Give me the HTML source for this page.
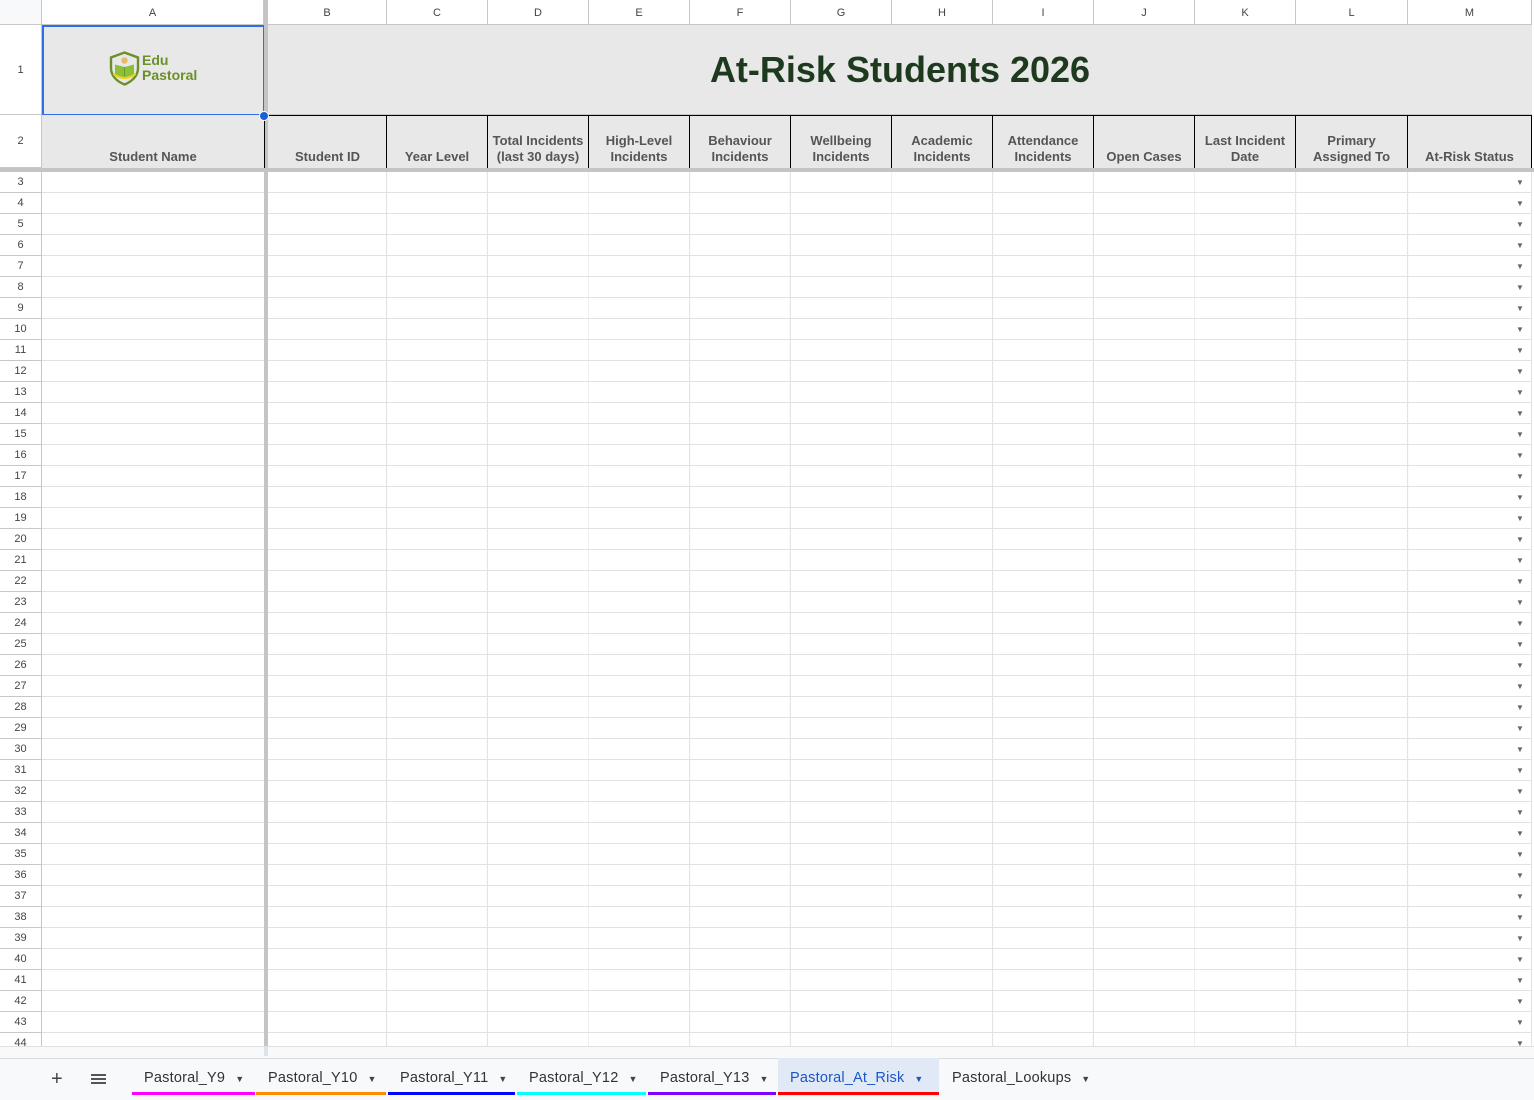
<!DOCTYPE html>
<html><head><meta charset="utf-8"><style>
*{box-sizing:border-box;margin:0;padding:0}
body{width:1534px;height:1100px;background:#fff;position:relative;overflow:hidden;font-family:"Liberation Sans",Arial,sans-serif}
.abs{position:absolute}
.colhdr{top:0;height:25px;background:#fff;border-bottom:1px solid #c7c7c7;border-right:1px solid #c7c7c7;font-size:11px;color:#444;text-align:center;line-height:26px}
.rownum{left:0;width:42px;font-size:11px;color:#444;text-align:center;border-right:1px solid #c7c7c7;border-bottom:1px solid #c7c7c7;background:#fff}
.h2{top:115px;height:53px;background:#e8e8e8;border-right:1px solid #000;border-top:1px solid #000;font-weight:bold;font-size:13px;color:#555;text-align:center;display:flex;align-items:flex-end;justify-content:center;padding-bottom:3px;line-height:16px}
#rows div{height:21px;line-height:21px}
.tab{top:1058px;height:38px;font-size:14.5px;color:#333;line-height:40px;padding-left:12px;letter-spacing:.2px}
.tab span{font-size:9px;margin-left:10px;color:#444}
</style></head><body>
<div class="abs colhdr" style="left:0;width:42px;background:#f8f9fa"></div>
<div class="abs colhdr" style="left:42px;width:222px">A</div>
<div class="abs colhdr" style="left:268px;width:119px">B</div>
<div class="abs colhdr" style="left:387px;width:101px">C</div>
<div class="abs colhdr" style="left:488px;width:101px">D</div>
<div class="abs colhdr" style="left:589px;width:101px">E</div>
<div class="abs colhdr" style="left:690px;width:101px">F</div>
<div class="abs colhdr" style="left:791px;width:101px">G</div>
<div class="abs colhdr" style="left:892px;width:101px">H</div>
<div class="abs colhdr" style="left:993px;width:101px">I</div>
<div class="abs colhdr" style="left:1094px;width:101px">J</div>
<div class="abs colhdr" style="left:1195px;width:101px">K</div>
<div class="abs colhdr" style="left:1296px;width:112px">L</div>
<div class="abs colhdr" style="left:1408px;width:124px">M</div>

<div class="abs rownum" style="top:25px;height:90px;line-height:90px">1</div>
<div class="abs" style="left:42px;top:25px;width:1490px;height:90px;background:#e8e8e8;border-bottom:1px solid #c7c7c7"></div>
<div class="abs" style="left:268px;top:25px;width:1264px;height:90px;text-align:center;line-height:90px;font-size:36px;font-weight:bold;color:#1e3a1e">At-Risk Students 2026</div>
<div class="abs" style="left:42px;top:25px;width:223px;height:91px;border:2px solid #2f6ee5"></div>
<div class="abs" style="left:259px;top:111px;width:10px;height:10px;border-radius:50%;background:#1a5fd6;border:1px solid #fff;z-index:3"></div>
<svg class="abs" style="left:109px;top:51px" width="31" height="35" viewBox="0 0 31 35">
<path d="M15.5 1.5 L29 6.5 V17 C29 25 23 30.5 15.5 33.5 C8 30.5 2 25 2 17 V6.5 Z" fill="none" stroke="#6c8f2a" stroke-width="2.4"/>
<circle cx="15.5" cy="9.5" r="3.2" fill="#e8b96a"/>
<path d="M6 13.5 L15.5 16 L25 13.5 V24 L15.5 26.5 L6 24 Z" fill="#8cbf3a"/>
<path d="M15.5 16 V26.5" stroke="#6c9a2a" stroke-width="1"/>
<path d="M4.5 23 Q15.5 31 26.5 23" fill="none" stroke="#f2d21e" stroke-width="2.2"/>
</svg>
<div class="abs" style="left:142px;top:53px;font-size:14px;font-weight:bold;color:#6c8f2a;line-height:15px">Edu<br>Pastoral</div>

<div class="abs rownum" style="top:115px;height:53px;line-height:53px">2</div>
<div class="abs h2" style="left:42px;width:222px;border:none">Student Name</div>
<div class="abs h2" style="left:264px;width:123px;border-left:1px solid #000;padding-left:4px">Student ID</div>
<div class="abs h2" style="left:387px;width:101px">Year Level</div>
<div class="abs h2" style="left:488px;width:101px">Total Incidents<br>(last 30 days)</div>
<div class="abs h2" style="left:589px;width:101px">High-Level<br>Incidents</div>
<div class="abs h2" style="left:690px;width:101px">Behaviour<br>Incidents</div>
<div class="abs h2" style="left:791px;width:101px">Wellbeing<br>Incidents</div>
<div class="abs h2" style="left:892px;width:101px">Academic<br>Incidents</div>
<div class="abs h2" style="left:993px;width:101px">Attendance<br>Incidents</div>
<div class="abs h2" style="left:1094px;width:101px">Open Cases</div>
<div class="abs h2" style="left:1195px;width:101px">Last Incident<br>Date</div>
<div class="abs h2" style="left:1296px;width:112px">Primary<br>Assigned To</div>
<div class="abs h2" style="left:1408px;width:124px">At-Risk Status</div>

<div class="abs" style="left:0;top:168px;width:1534px;height:4px;background:#c4c4c4"></div>
<div class="abs" style="left:264px;top:0;width:4px;height:1046px;background:#c4c4c4;z-index:2"></div>
<div class="abs" style="left:264px;top:115px;width:4px;height:53px;background:#c4c4c4;z-index:2;border-left:1px solid #000"></div>

<div class="abs" style="left:42px;top:172px;width:1490px;height:874px;
background:
repeating-linear-gradient(to bottom,transparent 0 20px,#e2e2e2 20px 21px),
linear-gradient(to right,transparent 386px,#e2e2e2 386px 387px,transparent 387px 487px,#e2e2e2 487px 488px,transparent 488px 588px,#e2e2e2 588px 589px,transparent 589px 689px,#e2e2e2 689px 690px,transparent 690px 790px,#e2e2e2 790px 791px,transparent 791px 891px,#e2e2e2 891px 892px,transparent 892px 992px,#e2e2e2 992px 993px,transparent 993px 1093px,#e2e2e2 1093px 1094px,transparent 1094px 1194px,#e2e2e2 1194px 1195px,transparent 1195px 1295px,#e2e2e2 1295px 1296px,transparent 1296px 1407px,#e2e2e2 1407px 1408px,transparent 1408px);
background-position:0 0,-42px 0"></div>
<div class="abs" style="left:1531px;top:172px;width:1px;height:874px;background:#e2e2e2"></div>
<div class="abs" style="left:1516px;top:172px;width:12px;font-size:8px;color:#666;line-height:21px">
<div>▼</div><div>▼</div><div>▼</div><div>▼</div><div>▼</div><div>▼</div><div>▼</div><div>▼</div><div>▼</div><div>▼</div><div>▼</div><div>▼</div><div>▼</div><div>▼</div><div>▼</div><div>▼</div><div>▼</div><div>▼</div><div>▼</div><div>▼</div><div>▼</div><div>▼</div><div>▼</div><div>▼</div><div>▼</div><div>▼</div><div>▼</div><div>▼</div><div>▼</div><div>▼</div><div>▼</div><div>▼</div><div>▼</div><div>▼</div><div>▼</div><div>▼</div><div>▼</div><div>▼</div><div>▼</div><div>▼</div><div>▼</div><div>▼</div>
</div>
<div id="rows" class="abs" style="left:0;top:172px;width:42px;height:874px;overflow:hidden;border-right:1px solid #c7c7c7;font-size:11px;color:#444;text-align:center;background:repeating-linear-gradient(to bottom,transparent 0 20px,#c7c7c7 20px 21px)">
<div>3</div><div>4</div><div>5</div><div>6</div><div>7</div><div>8</div><div>9</div><div>10</div><div>11</div><div>12</div><div>13</div><div>14</div><div>15</div><div>16</div><div>17</div><div>18</div><div>19</div><div>20</div><div>21</div><div>22</div><div>23</div><div>24</div><div>25</div><div>26</div><div>27</div><div>28</div><div>29</div><div>30</div><div>31</div><div>32</div><div>33</div><div>34</div><div>35</div><div>36</div><div>37</div><div>38</div><div>39</div><div>40</div><div>41</div><div>42</div><div>43</div><div>44</div>
</div>

<div class="abs" style="left:0;top:1046px;width:1534px;height:12px;background:#f8f9fa;border-top:1px solid #e0e0e0"></div>
<div class="abs" style="left:264px;top:1047px;width:4px;height:9px;background:#dde3ea"></div>

<div class="abs" style="left:0;top:1058px;width:1534px;height:42px;background:#f8f9fa;border-top:1px solid #dadce0"></div>
<div class="abs" style="left:51px;top:1064px;font-size:20px;color:#444;line-height:30px">+</div>
<div class="abs" style="left:91px;top:1074px;width:15px;height:10px;border-top:2px solid #555;border-bottom:2px solid #555"></div>
<div class="abs" style="left:91px;top:1078px;width:15px;height:2px;background:#555"></div>
<div class="abs tab" style="left:132px;width:123px">Pastoral_Y9<span>▼</span></div>
<div class="abs" style="left:132px;top:1092px;width:123px;height:3px;background:#f0f"></div>
<div class="abs tab" style="left:256px;width:130px">Pastoral_Y10<span>▼</span></div>
<div class="abs" style="left:256px;top:1092px;width:130px;height:3px;background:#ff8c00"></div>
<div class="abs tab" style="left:388px;width:127px">Pastoral_Y11<span>▼</span></div>
<div class="abs" style="left:388px;top:1092px;width:127px;height:3px;background:#00f"></div>
<div class="abs tab" style="left:517px;width:129px">Pastoral_Y12<span>▼</span></div>
<div class="abs" style="left:517px;top:1092px;width:129px;height:3px;background:#0ff"></div>
<div class="abs tab" style="left:648px;width:128px">Pastoral_Y13<span>▼</span></div>
<div class="abs" style="left:648px;top:1092px;width:128px;height:3px;background:#8000ff"></div>
<div class="abs tab" style="left:778px;width:161px;background:#e1e9f7;color:#1a56c9;font-weight:500">Pastoral_At_Risk<span style="color:#1a56c9">▼</span></div>
<div class="abs" style="left:778px;top:1092px;width:161px;height:3px;background:#f00"></div>
<div class="abs tab" style="left:940px;width:160px">Pastoral_Lookups<span>▼</span></div>
</body></html>
